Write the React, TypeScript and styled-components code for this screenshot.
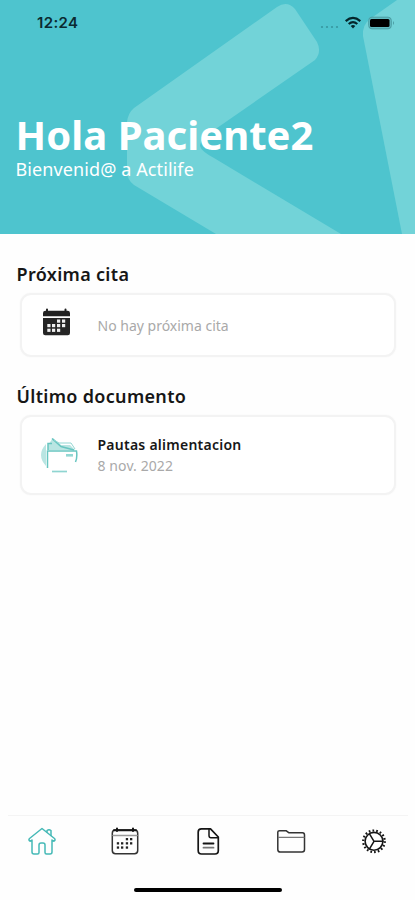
import React from "react";
import styled, { createGlobalStyle } from "styled-components";

const GlobalStyle = createGlobalStyle`
  * { box-sizing: border-box; }
  body { margin: 0; background: #fff; font-family: "Noto Sans", sans-serif; }
`;

const Screen = styled.div`
  width: 415px;
  height: 900px;
  display: flex;
  flex-direction: column;
  overflow: hidden;
  background: #fefefe;
`;

const Header = styled.header`
  position: relative;
  flex: none;
  height: 234px;
  background: #4ec4ce;
  overflow: hidden;
`;

const Backdrop = styled.svg`
  position: absolute;
  inset: 0;
  z-index: 0;
`;

const StatusBar = styled.div`
  position: relative;
  display: flex;
  align-items: center;
  justify-content: space-between;
  height: 46px;
  padding: 0 20px 0 37px;
`;

const Clock = styled.span`
  font: 600 15px/20px Inter, sans-serif;
  letter-spacing: 0.35px;
  color: #0b2a30;
`;

const StatusIcons = styled.svg`
  display: block;
`;

const Greeting = styled.div`
  position: relative;
  padding: 66px 0 0 15.5px;
  color: #fff;
  white-space: nowrap;
`;

const Title = styled.h1`
  margin: 0;
  font-size: 40px;
  line-height: 46px;
  font-weight: 700;
  letter-spacing: 0.05px;
`;

const Subtitle = styled.p`
  margin: 0;
  font-size: 18px;
  line-height: 22px;
  letter-spacing: 0.1px;
`;

const Content = styled.main`
  flex: 1;
  padding: 28px 19px 0 20px;
`;

const Section = styled.section<{ $gap?: number }>`
  margin-top: ${(p) => p.$gap ?? 0}px;
`;

const SectionTitle = styled.h2`
  margin: 0 0 6px -3.5px;
  font-size: 18px;
  line-height: 25px;
  font-weight: 600;
  color: #161616;
  letter-spacing: 0.32px;
  white-space: nowrap;
`;

const Card = styled.div<{ $height: number }>`
  display: flex;
  align-items: center;
  height: ${(p) => p.$height}px;
  padding-left: 18px;
  border: 2px solid #f3f3f3;
  border-radius: 11px;
  background: #fff;
  box-shadow: 0 0 2px #f6f6f6;
`;

const CardIcon = styled.svg<{ $lift?: number }>`
  flex: none;
  margin-right: 19.5px;
  margin-top: -${(p) => p.$lift ?? 0}px;
`;

const CardText = styled.div`
  display: flex;
  flex-direction: column;
  white-space: nowrap;
`;

const CardTitle = styled.span`
  font-size: 14px;
  line-height: 21px;
  font-weight: 600;
  letter-spacing: 0.25px;
  color: #171717;
`;

const CardNote = styled.span<{ $spacing?: number }>`
  font-size: 14px;
  line-height: 21px;
  color: #a9a9a9;
  letter-spacing: ${(p) => p.$spacing ?? 0}px;
`;

const TabBar = styled.nav`
  flex: none;
  display: grid;
  grid-template-columns: repeat(5, 83px);
  height: 71px;
  margin: 0;
  padding-top: 10px;
  background: linear-gradient(#f4f4f4, #f4f4f4) 8px 0 / 400px 1px no-repeat;
`;

const Tab = styled.button<{ $active?: boolean }>`
  display: flex;
  justify-content: center;
  align-items: flex-start;
  border: 0;
  padding: 0;
  background: none;
  color: ${(p) => (p.$active ? "#45b9b6" : "#151515")};
`;

const TabIcon = styled.svg`
  display: block;
  fill: none;
  stroke: currentColor;
  stroke-width: 1.5;
  stroke-linejoin: round;
  stroke-linecap: round;
`;

const HomeIndicator = styled.div`
  flex: none;
  align-self: center;
  width: 148px;
  height: 4px;
  margin: 2px 0 8px;
  border-radius: 2px;
  background: #000;
`;

const Dots = ({ points, size, fill }: { points: number[][]; size: number; fill: string }) => (
  <>
    {points.map(([x, y]) => (
      <rect key={`${x}-${y}`} x={x} y={y} width={size} height={size} fill={fill} stroke="none" />
    ))}
  </>
);

const Brand = () => (
  <Backdrop width="415" height="234" viewBox="0 0 415 234" fill="#72d3d8">
    <path d="M134 108 L277 7 Q287 0 295 9 L317 42 Q322 52 315 60 L217 128 Q200 139 200 146 Q201 151 214 158 L341 234 H216 L134 185 Q127 180 127 171 V122 Q128 113 134 108Z" />
    <path d="M415 0 H397 L370 19 Q362 25 363 36 L402 234 H415Z" />
  </Backdrop>
);

const Signals = () => (
  <StatusIcons width="75" height="20" viewBox="0 0 75 20">
    <g fill="#3797a0">
      <circle cx="2" cy="14" r="1.1" /><circle cx="7" cy="14" r="1.1" />
      <circle cx="12" cy="14" r="1.1" /><circle cx="17" cy="14" r="1.1" />
    </g>
    <g fill="none" stroke="#04262b" strokeWidth="2.2">
      <path d="M25.7 8.1 Q33 1.8 40.3 8.1" />
      <path d="M28.7 11 Q33 7.2 37.3 11" />
    </g>
    <path d="M30.7 12.9 Q33 11.2 35.3 12.9 L33 15.4Z" fill="#04262b" />
    <rect x="48.7" y="4.2" width="22.6" height="11.6" rx="3.2" fill="#62bcc2" stroke="#4a9da3" />
    <rect x="50" y="6" width="19.5" height="8" rx="1.5" fill="#000" />
    <path d="M73 8 Q75 10 73 12Z" fill="#4a9da3" />
  </StatusIcons>
);

const dayDots = [
  [15, 11], [19.2, 11],
  [6, 15.2], [10.2, 15.2], [15, 15.2], [19.2, 15.2],
  [6, 19.4], [10.2, 19.4], [15, 19.4],
];

export default function App() {
  return (
    <>
      <GlobalStyle />
      <Screen>
        <Header>
          <Brand />
          <StatusBar>
            <Clock>12:24</Clock>
            <Signals />
          </StatusBar>
          <Greeting>
            <Title>Hola Paciente2</Title>
            <Subtitle>Bienvenid@ a Actilife</Subtitle>
          </Greeting>
        </Header>

        <Content>
          <Section>
            <SectionTitle>Próxima cita</SectionTitle>
            <Card $height={64}>
              <CardIcon $lift={6} width="38" height="30" viewBox="2 0 38 30">
                <path d="M5 9.3 V6 Q5 3.7 7.5 3.7 H29.5 Q32 3.7 32 6 V9.3Z" fill="#222" />
                <path d="M9 2.5 V5 M27.5 2.5 V5" stroke="#222" strokeWidth="2" strokeLinecap="round" />
                <path d="M5 11 H32 V26 Q32 28.3 29.7 28.3 H7.3 Q5 28.3 5 26Z" fill="#252525" />
                <Dots
                  points={[[19, 12.5], [24, 12.5], [9.3, 17], [14, 17], [19, 17], [24, 17], [9.3, 21.7], [14, 21.7], [19, 21.7]]}
                  size={3.2}
                  fill="#efefef"
                />
              </CardIcon>
              <CardText>
                <CardNote>No hay próxima cita</CardNote>
              </CardText>
            </Card>
          </Section>

          <Section $gap={27}>
            <SectionTitle>Último documento</SectionTitle>
            <Card $height={80}>
              <CardIcon width="38" height="38" viewBox="0 0 38 38" fill="none">
                <path d="M8 9 L13 2 L21 9 H30 L35 14 H8Z" fill="#b9e5e2" />
                <path d="M6 8 Q-4 19 6 30Z" fill="#b9e5e2" />
                <path d="M7.5 32 V15 H36.5 Q37.5 21 35.5 26" stroke="#67c5c0" strokeWidth="1.5" />
                <path d="M8 14 V7.5 H12 M12 2.5 L21 10.5 L34 14" stroke="#67c5c0" strokeWidth="1.5" />
                <path d="M14 4 L19 7 H31 L35 13" stroke="#94d7d3" />
                <path d="M26 19.3 H33" stroke="#94d7d3" strokeWidth="2.6" />
                <path d="M12 35.5 H27" stroke="#8fd5d1" strokeWidth="1.7" />
              </CardIcon>
              <CardText>
                <CardTitle>Pautas alimentacion</CardTitle>
                <CardNote $spacing={0.1}>8 nov. 2022</CardNote>
              </CardText>
            </Card>
          </Section>
        </Content>

        <TabBar>
          <Tab $active aria-label="Inicio">
            <TabIcon width="30" height="36" viewBox="0 0 30 36">
              <path d="M5 15 L3.3 16.2 Q1 15.3 2.5 13.5 L15 3.5 L27.5 13.5 Q29 15.3 26.7 16.2 L25 15 V27 Q25 29 23 29 H19.5 Q18 29 18 27.5 V20 Q18 18 16 18 H14 Q12 18 12 20 V27.5 Q12 29 10.5 29 H7 Q5 29 5 27Z" />
              <path d="M20 7 V5.5 Q22 4 24 5.5 V10.5" />
            </TabIcon>
          </Tab>
          <Tab aria-label="Calendario">
            <TabIcon width="30" height="36" viewBox="0 0 30 36">
              <rect x="2.3" y="5" width="25.4" height="23.7" rx="3.2" stroke="#333" />
              <path d="M4 5.2 H26" strokeWidth="2" />
              <path d="M7 3.5 V6 M23 3.5 V6" strokeWidth="2" />
              <path d="M3 10.5 H27" stroke="#999" />
              <Dots points={dayDots.map(([x, y]) => [x + 0.8, y + 2])} size={2.3} fill="#222" />
            </TabIcon>
          </Tab>
          <Tab aria-label="Documentos">
            <TabIcon width="30" height="36" viewBox="0 0 30 36">
              <path d="M8.5 3.8 H17.5 L25.3 12 V25.5 Q25.3 29 22 29 H8.5 Q5.2 29 5.2 25.5 V7 Q5.2 3.8 8.5 3.8Z" strokeWidth="1.7" />
              <path d="M16 4.5 V10.5 Q16 12.8 18 12.8 H24.5" />
              <path d="M10.5 18.5 H20.5" strokeWidth="1.8" />
              <path d="M10.5 22.7 H20.5" stroke="#777" strokeWidth="1.8" />
            </TabIcon>
          </Tab>
          <Tab aria-label="Carpetas">
            <TabIcon width="30" height="36" viewBox="0 0 30 36">
              <path d="M1.8 9 V7 Q1.8 5.7 3.5 5.7 H10 L12.7 7.7 H26.5 Q28.5 7.7 28.5 10 V24.5 Q28.5 27 26 27 H4.3 Q1.8 27 1.8 24.5Z" stroke="#333" />
              <path d="M2.5 12.3 H28" stroke="#777" strokeWidth="1.3" />
            </TabIcon>
          </Tab>
          <Tab aria-label="Ajustes">
            <TabIcon width="30" height="36" viewBox="0 0 30 36">
              <circle cx="15" cy="16.3" r="8.9" strokeWidth="1.6" />
              <circle cx="15" cy="16.3" r="10.8" strokeWidth="2.2" strokeDasharray="1.7 2.07" strokeLinecap="butt" />
              <path d="M15 16.3 H24 M15 16.3 L10.5 8.8 M15 16.3 L10.5 23.8" strokeWidth="1.5" />
            </TabIcon>
          </Tab>
        </TabBar>
        <HomeIndicator />
      </Screen>
    </>
  );
}
